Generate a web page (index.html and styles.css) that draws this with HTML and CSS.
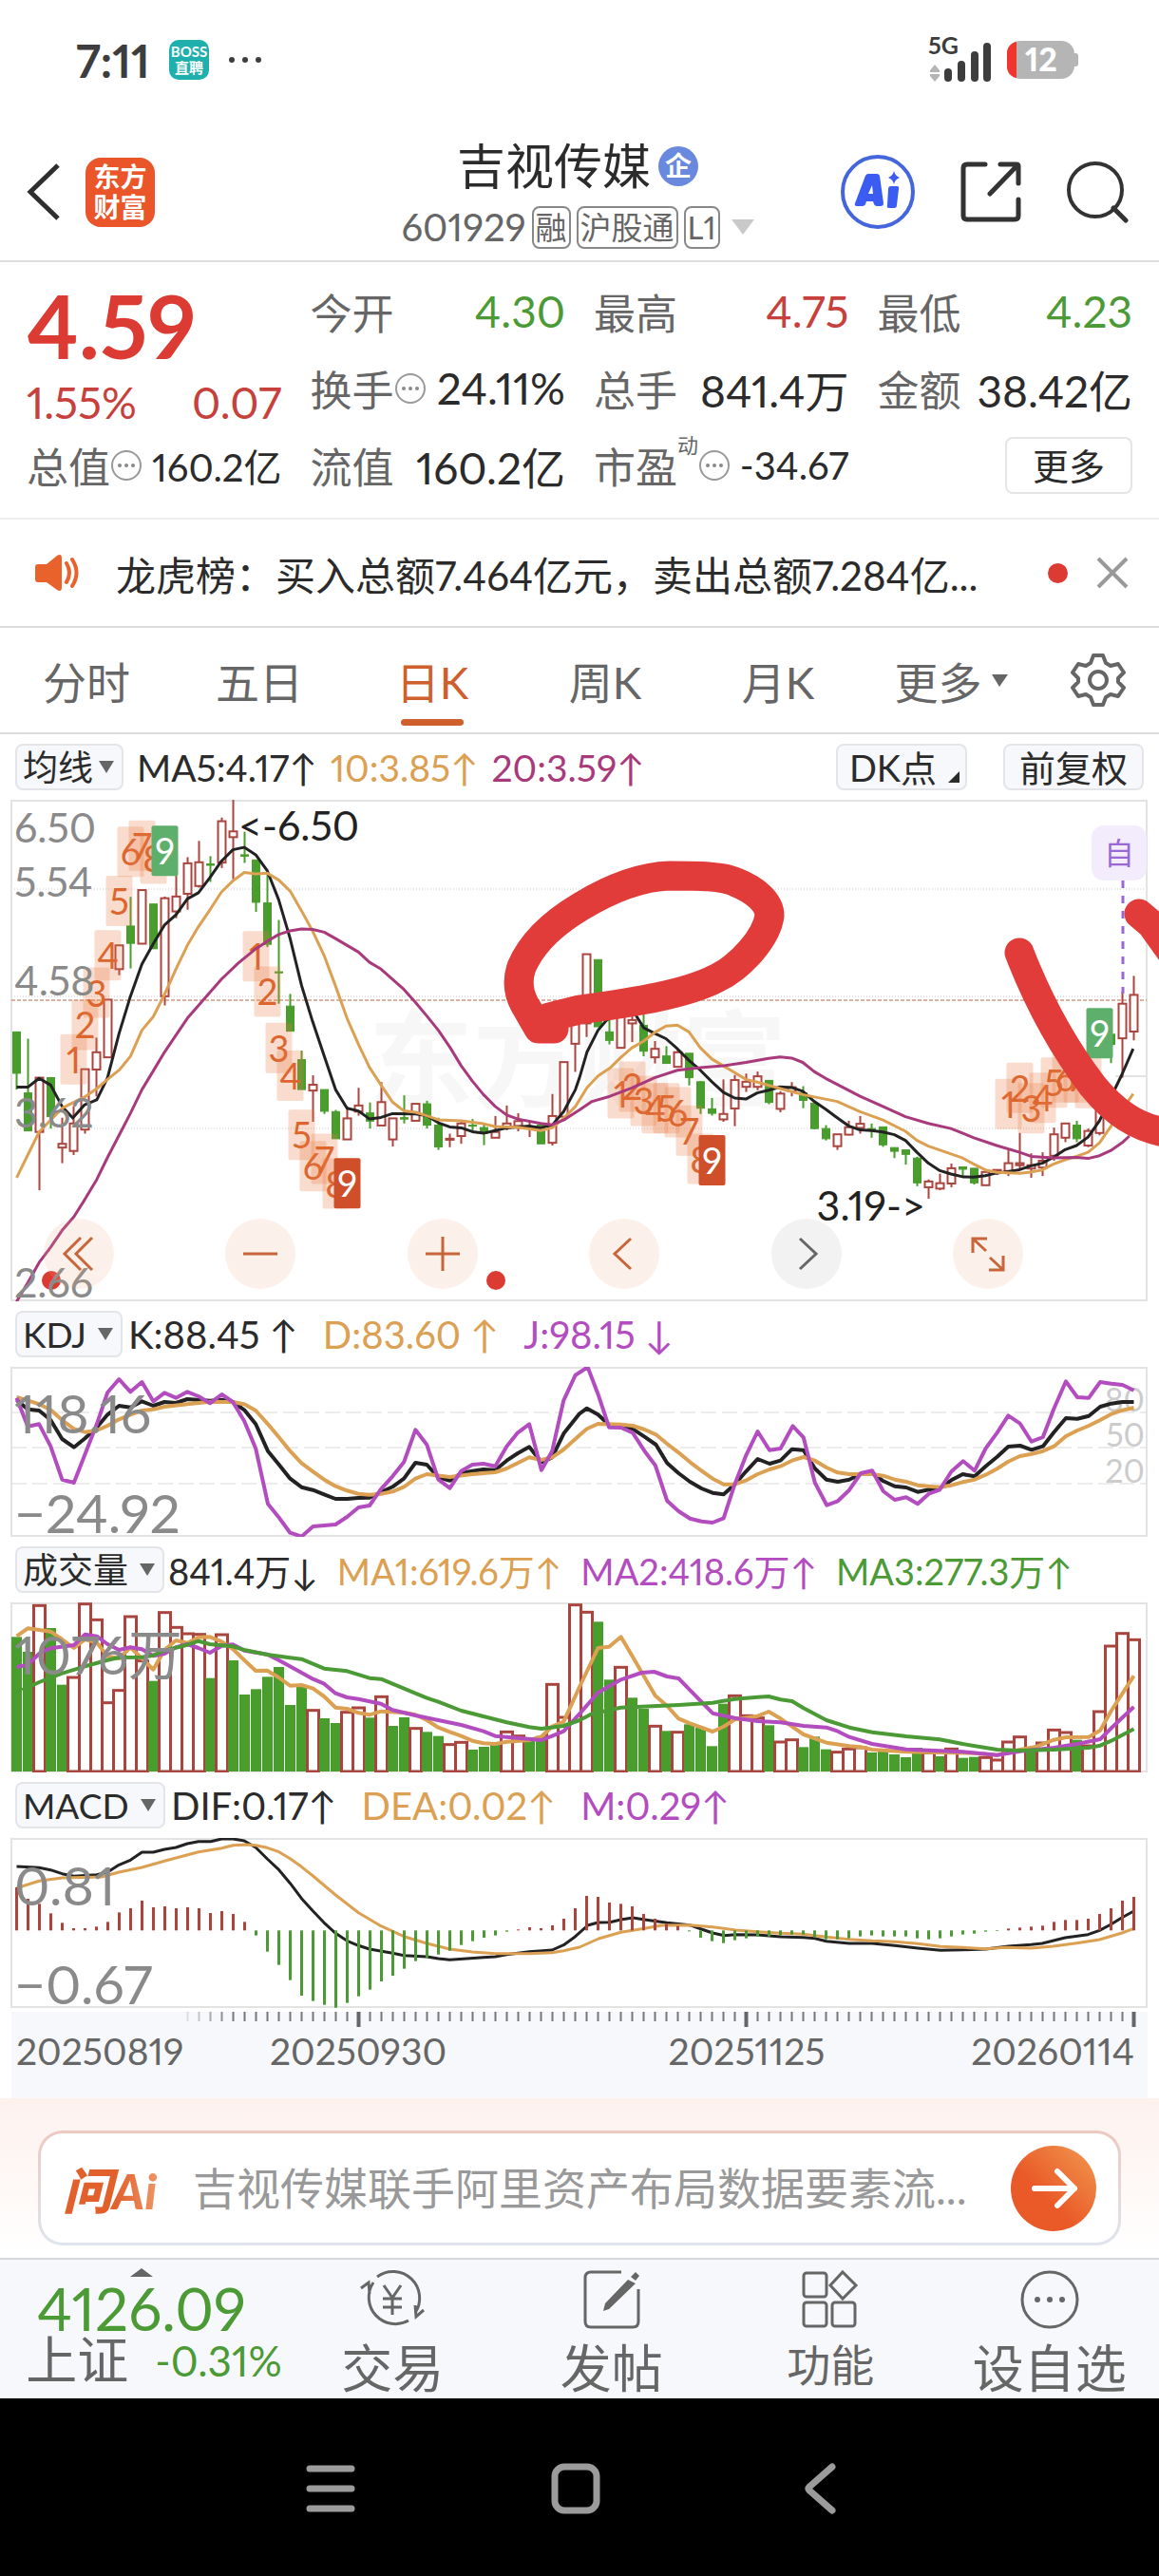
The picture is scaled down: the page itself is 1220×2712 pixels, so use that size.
FILE: index.html
```html
<!DOCTYPE html>
<html lang="zh-CN">
<head>
    <meta charset="UTF-8">
    <meta name="viewport" content="width=device-width, initial-scale=1.0">
    <title>吉视传媒 601929</title>
    <link rel="stylesheet" href="styles.css">
</head>
<body>
    <div class="status-bar">
        <span class="clock">7:11</span>
        <span class="boss"><span>BOSS</span><span>直聘</span></span>
        <svg class="dots" width="36" height="8" viewBox="0 0 36 8"><circle cx="4" cy="4" r="3"/><circle cx="18" cy="4" r="3"/><circle cx="32" cy="4" r="3"/></svg>
        <div class="signal">
            <span class="net">5G</span>
            <svg width="68" height="46" viewBox="0 0 68 46">
                <path d="M2 34l5-6 5 6v2H2zM2 38h10v2l-5 6-5-6z" fill="#b5b5b5"/>
                <path d="M21 42V36M35 42V28M49 42V18M62 42V9" stroke="#3d3d3d" stroke-width="8" stroke-linecap="round"/>
            </svg>
        </div>
        <svg class="battery" width="76" height="40" viewBox="0 0 76 40">
            <rect x="68" y="13" width="7" height="14" rx="3" fill="#b5b5b5"/>
            <rect width="71" height="40" rx="14" fill="#b5b5b5"/>
            <path d="M10 1V39C4 38 0 33 0 27V13C0 7 4 2 10 1z" fill="#f0352f"/>
            <text x="36" y="32" text-anchor="middle">12</text>
        </svg>
    </div>

    <header class="top">
        <div class="top-left">
            <button class="icon-btn" aria-label="返回">
                <svg width="36" height="60" viewBox="0 0 36 60"><path d="M33 2L4 30l29 28" fill="none" stroke="#2e2e2e" stroke-width="5"/></svg>
            </button>
            <a class="logo" href="#"><span>东方</span><span>财富</span></a>
        </div>
        <div class="top-title">
            <h1>吉视传媒<span class="corp">企</span></h1>
            <div class="code">
                <span>601929</span><span class="tag">融</span><span class="tag">沪股通</span><span class="tag">L1</span>
                <svg width="24" height="16" viewBox="0 0 24 16"><path d="M0 0h24L12 16z" fill="#c9c9c9"/></svg>
            </div>
        </div>
        <div class="top-right">
            <button class="icon-btn" aria-label="Ai">
                <svg width="80" height="80" viewBox="0 0 80 80">
                    <circle cx="40" cy="40" r="37" fill="#fff" stroke="#4565dc" stroke-width="4"/>
                    <path d="M30 21h9q2 0 3 2l4 29q0 3-3 3h-4q-2 0-3-2l-1-3h-7l-1 3q-1 2-3 2h-6q-3 0-2-3l11-29q1-2 3-2zM34 33l-4 9h5z" fill="#3b5cf0" fill-rule="evenodd"/>
                    <path d="M54 34h6q3 0 2 3l-2 17q0 3-3 3h-5q-3 0-2-3l1-17q0-3 3-3z" fill="#3b5cf0"/>
                    <path d="M57 18q1 5 6 7-5 2-6 7-1-5-6-7 5-2 6-7z" fill="#3b5cf0"/>
                </svg>
            </button>
            <button class="icon-btn" aria-label="分享">
                <svg width="64" height="64" viewBox="0 0 64 64"><path d="M26 3H7q-4 0-4 4v50q0 4 4 4h50q4 0 4-4V40M42 3h17q2 0 2 2v18M60 4L31 34" fill="none" stroke="#333" stroke-width="5" stroke-linecap="round"/></svg>
            </button>
            <button class="icon-btn" aria-label="搜索">
                <svg width="66" height="66" viewBox="0 0 66 66"><circle cx="31" cy="31" r="28" fill="none" stroke="#333" stroke-width="4"/><path d="M50 50l13 13" stroke="#333" stroke-width="5" stroke-linecap="round"/></svg>
            </button>
        </div>
    </header>

    <section class="quote">
        <div class="price-box">
            <div class="price">4.59</div>
            <div class="change"><span>1.55%</span><span>0.07</span></div>
        </div>
        <div class="cell"><span>今开</span><b class="down">4.30</b></div>
        <div class="cell"><span>最高</span><b class="up">4.75</b></div>
        <div class="cell"><span>最低</span><b class="down">4.23</b></div>
        <div class="cell"><span>换手</span><svg class="more-dot"><use href="#dot3"/></svg><b>24.11%</b></div>
        <div class="cell"><span>总手</span><b>841.4万</b></div>
        <div class="cell"><span>金额</span><b>38.42亿</b></div>
        <div class="cell"><span>总值</span><svg class="more-dot"><use href="#dot3"/></svg><b class="small">160.2亿</b></div>
        <div class="cell"><span>流值</span><b>160.2亿</b></div>
        <div class="cell"><span>市盈</span><sup>动</sup><svg class="more-dot"><use href="#dot3"/></svg><b class="small">-34.67</b></div>
        <div class="cell"><button class="more-btn">更多</button></div>
    </section>

    <svg class="defs" width="0" height="0">
        <symbol id="dot3" viewBox="0 0 34 34">
            <circle cx="17" cy="17" r="15" fill="none" stroke="#999" stroke-width="2"/>
            <circle cx="10" cy="17" r="2" fill="#888"/><circle cx="17" cy="17" r="2" fill="#888"/><circle cx="24" cy="17" r="2" fill="#888"/>
        </symbol>
    </svg>

    <div class="news">
        <svg width="48" height="40" viewBox="0 0 48 40">
            <path d="M3 11h9L23 2q5-3 5 3v30q0 6-5 3L12 30H3q-3 0-3-3V14q0-3 3-3z" fill="#ea622b"/>
            <path d="M33 10q6 10 0 20M39 6q9 14 0 28" fill="none" stroke="#ea622b" stroke-width="4" stroke-linecap="round"/>
        </svg>
        <a href="#">龙虎榜：买入总额7.464亿元，卖出总额7.284亿...</a>
        <i></i>
        <button class="icon-btn" aria-label="关闭">
            <svg width="34" height="34" viewBox="0 0 34 34"><path d="M2 2l30 30M32 2L2 32" stroke="#999" stroke-width="4"/></svg>
        </button>
    </div>

    <nav class="tabs">
        <button>分时</button>
        <button>五日</button>
        <button class="active">日K</button>
        <button>周K</button>
        <button>月K</button>
        <button class="tab-more">更多<svg width="17" height="13" viewBox="0 0 17 13"><path d="M0 0h17L8 13z" fill="#666"/></svg></button>
        <button class="gear" aria-label="设置">
            <svg width="58" height="58" viewBox="0 0 58 58" fill="none" stroke="#666" stroke-width="4" stroke-linejoin="round">
                <path d="M24 3h10l3 8 5 3 8-2 6 9-6 6v4l6 6-6 9-8-2-5 3-3 8H24l-3-8-5-3-8 2-6-9 6-6v-4l-6-6 6-9 8 2 5-3z"/>
                <circle cx="29" cy="29" r="9"/>
            </svg>
        </button>
    </nav>

    <main>
        <div class="ind ind-main">
            <span class="picker"><select aria-label="均线"><option>均线</option></select></span>
            <span>MA5:4.17↑</span><span class="orange">10:3.85↑</span><span class="magenta">20:3.59↑</span>
            <button class="chip dk">DK点</button>
            <button class="chip">前复权</button>
        </div>
        <div class="kline">
            <svg class="chart" viewBox="0 0 1220 528">
                <text class="watermark" x="388" y="315">东方财富</text>
                <path class="grid-dot" d="M12 94H1207M12 207H1207M12 346H1207"/>
                <path class="frame" d="M1174 291H1207"/>
                <rect class="frame" x="12" y="1" width="1195" height="526"/>
                <path class="last-price" d="M12 211H1207"/>
                <g id="candles"></g>
                <g id="tags"></g>
                <g id="maLines"></g>
                <circle class="dot" cx="54" cy="506" r="10"/>
                <circle class="dot" cx="522" cy="506" r="10"/>
                <g class="axis-price">
                    <text x="15" y="45">6.50</text>
                    <text x="15" y="102">5.54</text>
                    <text x="15" y="206">4.58</text>
                    <text x="15" y="345">3.62</text>
                    <text x="15" y="524">2.66</text>
                </g>
                <g class="extreme">
                    <text x="251" y="43">&lt;-6.50</text>
                    <text x="974" y="443" text-anchor="end">3.19-&gt;</text>
                </g>
                <path class="self-line" d="M1182 85V204"/>
                <rect x="1149" y="27" width="58" height="58" rx="13" fill="#f2ecfd"/>
                <text class="self" x="1178" y="68" text-anchor="middle">自</text>
                <g class="pen">
                    <path d="M583 241L567 241L552 215Q542 196 549 176C560 150 585 128 612 112C645 92 675 81 705 80C735 80 760 80 775 87C795 95 810 108 810 122C807 145 780 175 756 187C725 204 670 213 610 221L578 229L583 241"/>
                    <path d="M1073 161C1090 205 1115 255 1150 301C1172 328 1195 345 1230 351"/>
                    <path d="M1199 120L1212 131L1240 170"/>
                </g>
            </svg>
            <div class="tools">
                <button aria-label="最左"><svg viewBox="0 0 40 40"><path d="M22 3L5 20l17 17M34 3L17 20l17 17"/></svg></button>
                <button aria-label="缩小"><svg viewBox="0 0 40 40"><path d="M2 20h36"/></svg></button>
                <button aria-label="放大"><svg viewBox="0 0 40 40"><path d="M2 20h36M20 2v36"/></svg></button>
                <button aria-label="左移"><svg viewBox="0 0 40 40"><path d="M27 4L10 20l17 16"/></svg></button>
                <button class="gray" aria-label="右移"><svg viewBox="0 0 40 40"><path d="M13 4l17 16-17 16"/></svg></button>
                <button aria-label="全屏"><svg viewBox="0 0 40 40"><path d="M4 19V4h15M4 4l14 13M36 22v15H21M36 37L22 24"/></svg></button>
            </div>
        </div>

        <div class="ind">
            <span class="picker"><select aria-label="指标一"><option>KDJ</option></select></span>
            <span>K:88.45 ↑</span><span class="orange">D:83.60 ↑</span><span class="purple">J:98.15 ↓</span>
        </div>
        <svg class="chart" viewBox="0 0 1220 179">
            <rect class="frame" x="12" y="1" width="1195" height="177"/>
            <path class="grid-dash" d="M12 48H1207M12 85H1207M12 123H1207"/>
            <g class="axis-right">
                <text x="1205" y="47">80</text>
                <text x="1205" y="84">50</text>
                <text x="1205" y="122">20</text>
            </g>
            <g id="kdjLines"></g>
            <g class="axis-big"><text x="15" y="70">118.16</text><text x="15" y="175">−24.92</text></g>
        </svg>

        <div class="ind ind-vol">
            <span class="picker"><select aria-label="指标二"><option>成交量</option></select></span>
            <span>841.4万↓</span><span class="orange">MA1:619.6万↑</span><span class="purple">MA2:418.6万↑</span><span class="green">MA3:277.3万↑</span>
        </div>
        <svg class="chart" viewBox="0 0 1220 179">
            <rect class="frame" x="12" y="1" width="1195" height="177"/>
            <g id="volBars"></g>
            <g id="volLines"></g>
            <g class="axis-big"><text x="15" y="76">1076万</text></g>
        </svg>

        <div class="ind">
            <span class="picker"><select aria-label="指标三"><option>MACD</option></select></span>
            <span>DIF:0.17↑</span><span class="orange">DEA:0.02↑</span><span class="purple">M:0.29↑</span>
        </div>
        <svg class="chart" viewBox="0 0 1220 179">
            <rect class="frame" x="12" y="1" width="1195" height="177"/>
            <g id="macdLines"></g>
            <g id="macdBars"></g>
            <g class="axis-big"><text x="15" y="71">0.81</text><text x="15" y="175">−0.67</text></g>
        </svg>

        <svg class="chart dates" viewBox="0 0 1220 91">
            <rect x="12" width="1196" height="91" fill="#f7f8fb"/>
            <g id="ticks"></g>
            <text x="17" y="56">20250819</text>
            <text x="377" y="56" text-anchor="middle">20250930</text>
            <text x="786" y="56" text-anchor="middle">20251125</text>
            <text x="1194" y="56" text-anchor="end">20260114</text>
        </svg>
    </main>

    <section class="ask">
        <form class="ask-box">
            <label for="askInput">问Ai</label>
            <input type="text" id="askInput" placeholder="吉视传媒联手阿里资产布局数据要素流...">
            <button type="button" aria-label="发送">
                <svg width="90" height="90" viewBox="0 0 90 90"><path d="M25 45h42M49 27l18 18-18 18" fill="none" stroke="#fff" stroke-width="6" stroke-linecap="round" stroke-linejoin="round"/></svg>
            </button>
        </form>
    </section>

    <nav class="bottom">
        <a class="index" href="#">
            <svg width="24" height="9" viewBox="0 0 24 9"><path d="M12 0l12 9H0z" fill="#666"/></svg>
            <span class="index-value">4126.09</span>
            <span class="index-row"><span class="index-name">上证</span><span class="index-pct">-0.31%</span></span>
        </a>
        <a href="#">
            <svg viewBox="0 0 72 66">
                <path d="M20 9A28 28 0 0 1 60 47M16 15A28 28 0 0 0 53 55M3 21l8-6 1 12M69 44l-8 7-1-12"/>
                <path d="M27 18l9 13 9-13M36 31v18M26 32h20M26 41h20"/>
            </svg>交易
        </a>
        <a href="#">
            <svg viewBox="0 0 72 66">
                <path d="M46 4H14q-6 0-6 6v46q0 6 6 6h44q6 0 6-6V22"/>
                <path d="M53 12l8 4-28 27-6 2 2-8zM56 9l5-5 4 4-4 5z" fill="#666" stroke="none"/>
            </svg>发帖
        </a>
        <a class="fn" href="#">
            <svg viewBox="0 0 72 66">
                <rect x="8" y="5" width="24" height="25" rx="3"/><path d="M49 4l14 14-14 14-13-14z"/>
                <rect x="8" y="36" width="24" height="25" rx="3"/><rect x="38" y="36" width="24" height="25" rx="3"/>
            </svg>功能
        </a>
        <a href="#">
            <svg viewBox="0 0 72 66">
                <circle cx="36" cy="33" r="29"/>
                <g fill="#666" stroke="none"><circle cx="23" cy="33" r="3"/><circle cx="36" cy="33" r="3"/><circle cx="49" cy="33" r="3"/></g>
            </svg>设自选
        </a>
    </nav>

    <div class="sys-nav">
        <button class="icon-btn" aria-label="最近任务"><svg width="52" height="54" viewBox="0 0 52 54"><path d="M4 6h44M4 27h44M4 48h44"/></svg></button>
        <button class="icon-btn" aria-label="主页"><svg width="52" height="54" viewBox="0 0 52 54"><rect x="4" y="4" width="44" height="46" rx="10"/></svg></button>
        <button class="icon-btn" aria-label="返回上级"><svg width="52" height="54" viewBox="0 0 52 54"><path d="M38 4L14 25q-2 2 0 4l24 21"/></svg></button>
    </div>

    <script src="script.js"></script>
</body>
</html>
```
FILE: styles.css
```css
* {
    box-sizing: border-box;
}
body {
    margin: 0;
    background-color: #fff;
    color: #2b2b2b;
    font-family: Lato, "Noto Sans CJK SC", sans-serif;
    font-variant-numeric: proportional-nums;
}
button, input, select {
    font: inherit;
    color: inherit;
    margin: 0;
    padding: 0;
    border: 0;
    background: none;
}
a {
    color: inherit;
    text-decoration: none;
}
svg {
    display: block;
    flex: none;
}
.defs {
    position: absolute;
}
.icon-btn {
    display: flex;
}

/* status bar */
.status-bar {
    display: flex;
    align-items: center;
    height: 126px;
    padding: 0 84px 0 80px;
}
.clock {
    font-size: 48px;
    font-weight: bold;
    color: #3d3d3d;
    width: 98px;
}
.boss {
    width: 42px;
    height: 42px;
    border-radius: 10px;
    background-color: #1fb0ae;
    color: #fff;
    display: flex;
    flex-direction: column;
    align-items: center;
    justify-content: center;
    font-size: 15px;
    font-weight: bold;
    line-height: 17px;
    margin-right: 20px;
}
.dots {
    fill: #3d3d3d;
}
.signal {
    display: flex;
    margin-left: auto;
    position: relative;
}
.net {
    position: absolute;
    top: -8px;
    left: 0;
    font-size: 25px;
    font-weight: bold;
    line-height: 30px;
    color: #3d3d3d;
}
.battery {
    margin-left: 15px;
    font-size: 34px;
    font-weight: 900;
    fill: #fff;
}

/* header */
.top {
    display: grid;
    grid-template-columns: 1fr auto 1fr;
    align-items: center;
    height: 150px;
    padding: 4px 32px 0 28px;
    border-bottom: 2px solid #ddd;
}
.top-left, .top-right {
    display: flex;
    align-items: center;
}
.top-left {
    gap: 26px;
}
.top-right {
    justify-content: flex-end;
    gap: 47px;
}
.logo {
    width: 73px;
    height: 73px;
    border-radius: 16px;
    background-color: #ea5529;
    color: #fff;
    font-size: 28px;
    font-weight: bold;
    line-height: 32px;
    display: flex;
    flex-direction: column;
    align-items: center;
    justify-content: center;
}
.top-title {
    display: flex;
    flex-direction: column;
    align-items: center;
    padding-top: 10px;
}
h1 {
    display: flex;
    align-items: center;
    gap: 8px;
    margin: 0;
    font-size: 51px;
    font-weight: normal;
    line-height: 64px;
}
.corp {
    width: 42px;
    height: 42px;
    border-radius: 50%;
    background-color: #6889dd;
    color: #fff;
    font-size: 28px;
    font-weight: bold;
    line-height: 40px;
    text-align: center;
}
.code {
    display: flex;
    align-items: center;
    gap: 6px;
    height: 64px;
    font-size: 40px;
    color: #666;
}
.code svg {
    margin-left: 6px;
}
.tag {
    border: 2px solid #888;
    border-radius: 8px;
    padding: 0 2px;
    font-size: 33px;
    line-height: 41px;
}

/* quote */
.quote {
    display: grid;
    grid-template-columns: repeat(4, 1fr);
    grid-auto-rows: 81px;
    column-gap: 30px;
    padding: 11px 28px 15px;
    border-bottom: 2px solid #eee;
}
.price-box {
    grid-row: span 2;
    color: #c7403b;
}
.price {
    font-size: 92px;
    font-weight: bold;
    line-height: 112px;
    color: #dc3b33;
}
.change {
    display: flex;
    justify-content: space-between;
    font-size: 46px;
    line-height: 50px;
}
.cell {
    display: flex;
    align-items: center;
    font-size: 44px;
    color: #666;
    white-space: nowrap;
}
.cell b {
    margin-left: auto;
    font-size: 46px;
    font-weight: normal;
    color: #2b2b2b;
}
.cell b.small {
    font-size: 40px;
}
.cell b.up {
    color: #c7403b;
}
.cell b.down {
    color: #4b9a36;
}
.cell sup {
    align-self: flex-start;
    font-size: 22px;
    line-height: 40px;
}
.more-dot {
    width: 34px;
    height: 34px;
}
.more-btn {
    margin-left: auto;
    width: 134px;
    height: 60px;
    border: 2px solid #e5e5e5;
    border-radius: 8px;
    color: #2b2b2b;
    font-size: 38px;
    line-height: 50px;
}

/* news */
.news {
    display: flex;
    align-items: center;
    height: 114px;
    padding: 0 32px 0 37px;
    border-bottom: 2px solid #ddd;
    font-size: 42px;
}
.news a {
    flex: 1;
    margin-left: 37px;
    white-space: nowrap;
}
.news i {
    width: 21px;
    height: 21px;
    margin-right: 30px;
    border-radius: 50%;
    background-color: #dc3b33;
}

/* tabs */
.tabs {
    display: flex;
    height: 112px;
    border-bottom: 2px solid #ddd;
    font-size: 46px;
    color: #666;
}
.tabs button {
    flex: 182;
    position: relative;
    display: flex;
    align-items: center;
    justify-content: center;
}
.tabs .tab-more {
    gap: 10px;
}
.tabs .gear {
    flex: 128;
}
.tabs .active {
    color: #cf5f2c;
}
.tabs .active::after {
    content: "";
    position: absolute;
    bottom: 7px;
    width: 66px;
    height: 7px;
    border-radius: 4px;
    background-color: #cf5f2c;
}

/* indicator rows */
.ind {
    display: flex;
    align-items: center;
    gap: 26px;
    height: 69px;
    padding: 0 16px;
    font-size: 40px;
    white-space: nowrap;
}
.ind-main {
    gap: 14px;
    font-size: 39px;
}
.ind-vol {
    gap: 20px;
    font-size: 38px;
}
.picker {
    position: relative;
    display: flex;
    margin-right: -20px;
}
.ind-vol .picker {
    margin-right: -16px;
}
.ind-main .picker {
    margin-right: 0;
}
.picker select {
    appearance: none;
    height: 49px;
    padding: 0 36px 0 6px;
    border: 2px solid #e3e5e9;
    border-radius: 8px;
    background-color: #f7f8fb;
    font-size: 37px;
    line-height: 45px;
}
.ind-main .picker select {
    padding-right: 30px;
}
.picker::after {
    content: "";
    position: absolute;
    right: 10px;
    top: 18px;
    border: 8px solid transparent;
    border-top: 13px solid #666;
    border-bottom: 0;
    pointer-events: none;
}
.chip {
    height: 49px;
    padding: 0 15px;
    border: 2px solid #e3e5e9;
    border-radius: 8px;
    background-color: #f7f8fb;
    font-size: 38px;
    line-height: 44px;
}
.chip.dk {
    position: relative;
    margin-left: auto;
    margin-right: 24px;
    padding: 0 30px 0 12px;
}
.chip.dk::after {
    content: "";
    position: absolute;
    right: 6px;
    bottom: 6px;
    border-left: 12px solid transparent;
    border-bottom: 12px solid #2b2b2b;
}
.orange {
    color: #dca052;
}
.magenta {
    color: #a83a7c;
}
.purple {
    color: #b34dbf;
}
.green {
    color: #4b9a36;
}

/* charts */
.chart {
    width: 100%;
    height: auto;
}
.kline {
    position: relative;
}
.frame {
    fill: none;
    stroke: #e3e3e3;
    stroke-width: 2;
}
.grid-dot {
    stroke: #ccc;
    stroke-dasharray: 1 2;
}
.grid-dash {
    stroke: #d9d9d9;
    stroke-width: 1;
    stroke-dasharray: 16 6;
}
.last-price {
    stroke: #b86b45;
    stroke-width: 1;
    stroke-dasharray: 4 2;
}
.watermark {
    font-size: 110px;
    font-weight: bold;
    fill: #f7f7f7;
}
.axis-price {
    font-size: 43px;
    fill: #8a8a8a;
}
.axis-big {
    font-size: 57px;
    fill: #8a8a8a;
}
.axis-right {
    font-size: 34px;
    fill: #ccc;
    text-anchor: end;
}
.extreme {
    font-size: 43px;
    fill: #222;
}
.dot {
    fill: #dc3b33;
}
.self {
    font-size: 32px;
    fill: #9a68d6;
}
.self-line {
    stroke: #9a68d6;
    stroke-width: 3;
    stroke-dasharray: 8 8;
}
.pen {
    fill: none;
    stroke: #e13c39;
    stroke-width: 31;
    stroke-linecap: round;
    stroke-linejoin: round;
}
.line {
    fill: none;
    stroke-width: 3;
    stroke-linejoin: round;
}
#kdjLines .line, #volLines .line {
    stroke-width: 4;
}
.line.k-black {
    stroke: #222;
}
.line.k-orange {
    stroke: #dca052;
}
.line.k-magenta {
    stroke: #a83a7c;
}
.line.k-purple {
    stroke: #b34dbf;
}
.line.k-green {
    stroke: #4b9a36;
}
.fall {
    fill: #489d2c;
    stroke: #489d2c;
}
.rise {
    fill: #fff;
    stroke: #a9453f;
    stroke-width: 2;
}
.bar-rise {
    fill: #fff;
    stroke: #a9453f;
    stroke-width: 3;
}
.bar-fall {
    fill: #489d2c;
}
.stick-up {
    stroke: #a9453f;
    stroke-width: 3;
}
.stick-down {
    stroke: #4b9a36;
    stroke-width: 3;
}
.wick {
    stroke-width: 2;
}
.tag-box {
    fill: #e87f46;
    fill-opacity: .27;
}
.tag-nine-up {
    fill: #5eaf6c;
}
.tag-nine-down {
    fill: #cf4f2a;
}
.tag-text {
    font-size: 38px;
    fill: #dd662f;
    text-anchor: middle;
}
.tag-text.nine {
    fill: #fff;
}
.dates {
    margin-top: 4px;
    font-size: 39px;
    fill: #666;
}
.tick {
    stroke: #777;
    stroke-width: 2;
}
.tick.major {
    stroke: #666;
    stroke-width: 4;
}
.tools {
    position: absolute;
    left: 46px;
    right: 143px;
    bottom: 13px;
    display: flex;
    justify-content: space-between;
}
.tools button {
    display: flex;
    width: 74px;
    height: 74px;
    align-items: center;
    justify-content: center;
    border-radius: 50%;
    background-color: rgba(240, 170, 130, .17);
    color: #c9653a;
}
.tools .gray {
    background-color: #f2f2f2;
    color: #666;
}
.tools svg {
    width: 40px;
    height: 40px;
    fill: none;
    stroke: currentColor;
    stroke-width: 3;
}

/* ask */
.ask {
    padding: 34px 40px 13px;
    background: linear-gradient(#fdf1ed, #fff);
}
.ask-box {
    display: flex;
    align-items: center;
    height: 121px;
    padding: 0 23px;
    border: 3px solid transparent;
    border-radius: 26px;
    background: linear-gradient(#fff, #fff) padding-box, linear-gradient(#ecc8c0, #dfe5ee) border-box;
}
.ask-box label {
    width: 137px;
    font-size: 52px;
    font-weight: 900;
    font-style: italic;
    background: linear-gradient(90deg, #e2602c 40%, #efa070 80%);
    background-clip: text;
    color: transparent;
}
.ask-box input {
    flex: 1;
    min-width: 0;
    height: 80px;
    font-size: 46px;
    outline: none;
}
.ask-box input::placeholder {
    color: #999;
    opacity: 1;
}
.ask-box button {
    border-radius: 50%;
    background: linear-gradient(45deg, #ea5a28 40%, #f09a50);
}

/* bottom nav */
.bottom {
    display: grid;
    grid-template-columns: 298px repeat(4, 1fr);
    height: 148px;
    border-top: 2px solid #d5d7da;
    background-color: #f7f8fb;
    color: #666;
    font-size: 54px;
    line-height: 80px;
    overflow: hidden;
}
.bottom a {
    display: flex;
    flex-direction: column;
    align-items: center;
    padding-top: 9px;
    white-space: nowrap;
}
.bottom a > svg {
    width: 72px;
    height: 66px;
    fill: none;
    stroke: #666;
    stroke-width: 3;
}
.bottom .fn {
    font-size: 46px;
    line-height: 72px;
}
.bottom .index > svg {
    width: 24px;
    height: 9px;
    stroke: none;
}
.index-value {
    font-size: 62px;
    line-height: 66px;
    color: #4b9a36;
}
.bottom .index-row {
    display: flex;
    align-items: center;
    gap: 28px;
    padding-left: 26px;
    line-height: 44px;
}
.index-pct {
    font-size: 44px;
    color: #4b9a36;
}

.sys-nav {
    display: flex;
    align-items: center;
    justify-content: center;
    gap: 206px;
    height: 189px;
    padding-right: 8px;
    background-color: #000;
}
.sys-nav svg {
    fill: none;
    stroke: #9b9b9b;
    stroke-width: 7;
    stroke-linecap: round;
}
```
FILE: script.js
```js
const NS = "http://www.w3.org/2000/svg";
const STEP = 12;
const FIRST = 17.5;
const KX = 610 / 1568; // data x to chart x

function add(parent, name, attrs, text) {
    const el = document.createElementNS(NS, name);
    for (const key in attrs) el.setAttribute(key, attrs[key]);
    if (text) el.textContent = text;
    parent.appendChild(el);
    return el;
}

const xAt = i => FIRST + STEP * i;
const priceY = v => v / 2.8 - 11;
const kdjY = v => v / 3 - 68;
const volY = v => v / 3 - 316;
const macdY = v => v / 3 - 64;

function drawLine(id, color, data, toY) {
    const points = data.trim().split(/\s+/).map(p => {
        const [x, y] = p.split(",").map(Number);
        return (x * KX).toFixed(1) + "," + toY(y).toFixed(1);
    });
    add(document.getElementById(id), "polyline", { class: "line k-" + color, points: points.join(" ") });
}

// direction, body top, body bottom, high, low
const candles = `G,715,837,715,885 G,895,1007,735,1007 R,850,1010,850,1182 G,850,965,848,1000 R,1045,1056,968,1102
R,985,1066,935,1078 R,825,1003,825,1015 R,775,826,732,905 R,620,790,620,790 R,460,530,460,548
G,403,454,317,528 R,297,455,297,455 G,338,470,338,470 R,321,610,316,637 R,316,360,255,380
R,218,308,200,355 R,215,285,152,290 G,220,224,197,273 R,94,216,83,232 R,124,141,31,265
G,193,197,125,217 G,208,333,208,361 G,335,457,250,465 G,538,541,385,632 G,639,713,603,713
G,797,885,770,885 R,871,888,843,980 G,885,949,885,957 G,950,1030,945,1030 R,970,1032,935,1032
R,932,950,880,962 G,954,978,923,1000 R,922,991,863,991 R,970,1032,970,1053 G,968,972,902,985
R,927,977,927,977 G,927,990,918,1000 G,990,1054,968,1063 R,1030,1033,1015,1055 R,985,1022,975,1045
G,990,993,972,1010 G,997,1014,985,1049 R,1010,1027,963,1027 R,985,995,932,1005 R,978,992,955,1008
R,994,997,980,1025 G,990,1045,990,1045 R,963,1042,898,1050 R,804,965,804,965 R,690,750,690,833
R,486,690,486,730 G,502,700,502,700 G,715,740,680,752 R,660,762,660,762 R,680,690,650,745
G,696,772,660,787 R,765,790,742,808 G,786,808,757,808 R,775,818,765,818 G,778,850,778,873
G,862,940,860,957 G,942,955,910,962 R,957,973,855,980 R,857,941,842,993 R,862,877,838,892
R,846,877,832,887 G,858,923,858,928 R,897,942,890,952 R,878,890,863,905 G,895,917,875,940
G,925,1000,925,1002 G,1000,1030,990,1035 R,1017,1052,1017,1063 R,996,1018,977,1020 R,986,998,963,1015
G,1000,1004,985,1027 G,995,1048,995,1054 G,1056,1067,1056,1087 G,1063,1076,1063,1106 G,1087,1160,1083,1170
R,1156,1173,1150,1207 R,1161,1177,1133,1182 R,1117,1162,1103,1173 G,1113,1120,1113,1140 G,1117,1160,1117,1165
R,1128,1167,1128,1167 R,1122,1127,1120,1137 R,1102,1125,1062,1140 R,1102,1108,1013,1122 R,1108,1118,1073,1145
R,1095,1115,1070,1140 R,1017,1080,997,1095 R,985,1027,985,1040 G,990,1030,977,1040 R,1007,1050,1000,1055
R,925,1013,925,1020 G,722,752,722,807 R,632,734,597,850 R,606,714,550,740`.split(/\s+/);

candles.forEach((row, i) => {
    const c = row.split(",");
    const [top, bottom, high, low] = c.slice(1).map(v => priceY(+v));
    const cls = c[0] === "G" ? "fall" : "rise";
    const g = document.getElementById("candles");
    add(g, "path", { class: cls + " wick", d: `M${xAt(i)} ${high}V${low}` });
    add(g, "rect", { class: cls, x: xAt(i) - 4, y: top, width: 8, height: Math.max(bottom - top, 1) });
});

// nine-turn marks: first candle and top of every mark
const marks = [
    { start: 5, nine: "up", tops: [722, 620, 525, 415, 255, 110, 92, 130, 107] },
    { start: 21, nine: "down", tops: [418, 522, 688, 770, 944, 1037, 1015, 1088, 1087] },
    { start: 53, nine: "down", tops: [822, 802, 844, 866, 866, 878, 932, 1015, 1019] },
    { start: 87, nine: "up", tops: [853, 806, 866, 835, 790, 775, 775, 792, 645] }
];
marks.forEach(m => m.tops.forEach((top, n) => {
    const g = document.getElementById("tags");
    const nine = n === 8;
    const x = xAt(m.start + n);
    const y = priceY(top);
    add(g, "rect", { class: nine ? "tag-nine-" + m.nine : "tag-box", x: x - 14, y: y, width: 28, height: 53, rx: 2 });
    add(g, "text", { class: nine ? "tag-text nine" : "tag-text", x: x, y: y + 41 }, String(n + 1));
}));

drawLine("maLines", "black", `45,878 75,878 106,852 137,872 168,935 197,969 229,930 262,915 291,850 322,720 353,610 384,515
415,455 445,400 476,370 507,323 537,305 568,260 599,212 630,178 661,171 692,193 723,240 754,325 785,440 816,578 846,685
877,785 908,885 939,940 970,948 1000,972 1031,967 1062,956 1124,957 1155,962 1186,983 1217,995 1248,998 1278,1009
1308,1014 1340,1006 1371,998 1432,993 1463,998 1494,990 1525,950 1557,885 1568,850 1588,775 1618,710 1640,682 1680,650
1720,665 1742,703 1771,719 1802,735 1833,765 1864,799 1895,828 1926,862 1957,893 1988,910 2018,913 2049,895 2080,887
2111,877 2142,879 2172,890 2203,920 2234,943 2265,968 2296,992 2327,1004 2358,1006 2389,1010 2420,1018 2450,1035
2481,1070 2512,1102 2543,1124 2573,1134 2605,1142 2635,1143 2666,1139 2697,1131 2728,1127 2759,1121 2790,1110
2820,1102 2850,1085 2882,1062 2913,1050 2944,1025 2975,977 3005,910 3036,840 3066,765`, priceY);
drawLine("maLines", "orange", `45,1145 75,1078 106,1010 168,940 229,907 262,882 291,855 322,828 353,787 384,710 415,670
445,605 476,530 507,460 537,405 568,355 599,303 630,270 661,245 692,249 723,247 754,267 785,300 816,358 846,418 877,490
908,580 939,675 970,752 1000,820 1031,872 1062,922 1093,948 1124,952 1155,962 1186,974 1248,977 1308,986 1340,994
1401,996 1463,1006 1494,998 1525,970 1557,935 1588,880 1618,845 1650,822 1680,790 1710,762 1742,742 1771,717 1802,698
1833,695 1864,715 1895,762 1926,795 1957,815 1988,835 2018,855 2049,863 2111,882 2172,900 2265,920 2327,950 2389,975
2450,1008 2481,1035 2512,1052 2573,1075 2605,1087 2635,1105 2666,1122 2697,1129 2759,1132 2790,1128 2820,1122
2850,1105 2882,1092 2913,1082 2944,1070 2975,1042 3005,995 3036,945 3066,898`, priceY);
drawLine("maLines", "magenta", `45,1510 75,1455 106,1395 137,1350 168,1300 200,1260 229,1210 262,1150 291,1085 322,1020
353,955 384,885 415,830 445,775 476,725 507,675 553,617 599,560 645,512 692,470 723,448 754,428 785,417 816,412 846,413
877,421 908,440 970,480 1000,510 1031,530 1093,590 1124,628 1155,668 1186,710 1217,760 1248,815 1278,860 1308,900
1340,935 1371,960 1401,972 1463,985 1494,989 1525,975 1568,945 1602,920 1650,905 1710,880 1771,850 1833,828 1895,820
1957,815 2018,805 2080,793 2111,789 2142,792 2172,805 2203,832 2234,852 2265,870 2327,905 2389,935 2450,965 2512,985
2573,1000 2635,1027 2697,1050 2759,1070 2790,1082 2850,1086 2913,1085 2944,1088 2975,1080 3005,1065 3036,1042
3056,1022`, priceY);

// KDJ
drawLine("kdjLines", "black", `45,308 75,338 106,342 137,372 168,432 200,458 230,430 262,395 291,355 322,327 353,332
384,313 415,327 445,315 476,318 507,306 568,311 600,308 630,315 661,340 692,385 725,470 755,513 785,557 816,584 847,593
877,607 908,621 939,621 970,618 1000,617 1031,600 1062,583 1093,557 1124,507 1155,513 1186,553 1217,563 1248,540
1278,533 1308,528 1340,530 1371,500 1401,477 1432,457 1465,505 1494,490 1525,415 1568,352 1588,335 1618,355 1648,387
1680,392 1712,400 1744,425 1775,450 1805,508 1836,540 1867,567 1898,588 1928,602 1958,607 1988,575 2018,535 2050,495
2082,510 2112,500 2143,464 2174,467 2205,525 2236,560 2267,567 2298,560 2329,542 2360,538 2390,565 2421,581 2452,585
2483,599 2513,592 2543,588 2574,562 2605,543 2637,550 2667,518 2698,488 2728,456 2760,453 2791,466 2822,455 2852,410
2884,366 2915,368 2946,359 2977,330 3007,320 3037,315 3068,315`, kdjY);
drawLine("kdjLines", "orange", `45,300 75,310 106,322 137,340 168,372 200,400 230,410 262,405 291,390 322,370 353,355
384,342 415,338 445,330 507,322 568,314 630,315 661,322 692,342 725,385 755,427 785,470 816,508 847,535 877,560 908,581
939,595 970,605 1000,608 1031,605 1062,598 1093,583 1124,557 1155,543 1217,552 1278,543 1340,537 1371,525 1401,508
1432,490 1465,498 1494,490 1525,465 1568,420 1588,400 1618,384 1680,386 1712,390 1744,402 1775,418 1805,447 1836,475
1867,505 1898,532 1928,557 1958,575 1988,575 2018,563 2050,543 2082,528 2112,518 2143,500 2174,489 2205,500 2236,522
2267,538 2298,543 2360,543 2390,548 2421,560 2452,567 2483,578 2543,584 2574,578 2605,568 2637,560 2667,545 2698,526
2728,503 2760,486 2791,479 2822,470 2852,455 2884,423 2915,405 2946,390 2977,372 3007,353 3037,341 3068,333`, kdjY);
drawLine("kdjLines", "purple", `45,302 75,392 106,385 137,455 168,560 200,570 230,480 262,385 291,285 322,243 353,283
384,252 415,313 445,286 476,302 507,283 537,297 568,319 600,291 630,315 661,375 692,462 725,637 755,680 785,728 816,740
847,708 908,702 939,678 970,648 1000,642 1031,590 1062,550 1093,505 1124,403 1155,450 1186,560 1217,587 1248,533
1278,513 1308,510 1340,518 1371,455 1401,412 1432,385 1465,530 1494,470 1525,310 1557,230 1590,205 1618,290 1648,395
1680,396 1712,412 1744,470 1773,515 1805,627 1836,660 1867,683 1898,692 1928,696 1958,682 1988,575 2018,485 2050,408
2082,467 2112,462 2145,391 2174,427 2205,570 2237,641 2267,628 2298,593 2329,540 2360,532 2390,597 2421,624 2452,616
2483,637 2513,605 2543,592 2574,535 2606,502 2637,532 2667,462 2698,412 2728,358 2760,383 2791,440 2822,426 2852,335
2884,250 2915,300 2946,302 2977,252 3007,257 3037,261 3068,278`, kdjY);

// volume
const volumes = `G1057 G1104 R955 G1029 G1208 R1182 R950 R1000 R1262 R1223 R990 R1130 G1196 R977 R1024 R1044 R1046 G1187
R1047 G1131 G1239 G1222 G1183 G1152 G1272 G1215 R1286 G1314 G1329 R1292 R1278 G1312 R1243 G1338 G1311 R1343 G1357 G1370
R1394 R1387 G1413 G1404 G1390 R1354 R1367 G1385 G1370 R1204 R1308 R953 R976 G1009 G1192 R1150 G1249 G1284 R1336 G1354
R1355 G1333 G1343 G1402 G1268 R1240 R1303 R1310 G1336 R1386 R1379 G1405 G1372 G1412 R1418 R1408 R1404 G1422 G1418 G1428
G1437 G1407 R1420 G1434 R1408 G1439 G1436 R1435 R1443 R1386 R1370 G1415 R1389 R1348 R1356 G1382 R1398 R1290 R1083 R1043
R1063`.split(/\s+/);
volumes.forEach((v, i) => {
    const up = v[0] === "R";
    const y = volY(+v.slice(1)) + (up ? 1 : 0);
    add(document.getElementById("volBars"), "rect", {
        class: up ? "bar-rise" : "bar-fall",
        x: xAt(i) - (up ? 6 : 5.5),
        y: y,
        width: up ? 12 : 11,
        height: 178 - y
    });
});
drawLine("volLines", "orange", `45,1055 75,1030 137,1040 168,1065 200,1092 230,1065 262,1075 291,1118 322,1125 353,1090
384,1125 415,1160 445,1098 476,1068 507,1076 537,1058 568,1057 600,1072 630,1095 661,1130 692,1164 723,1163 754,1185
785,1211 816,1209 847,1220 877,1245 908,1280 939,1284 970,1297 1000,1303 1031,1292 1093,1296 1124,1303 1155,1320
1186,1343 1217,1357 1248,1370 1278,1385 1308,1393 1340,1395 1371,1388 1432,1383 1465,1372 1494,1340 1525,1325 1568,1215
1618,1092 1648,1088 1680,1057 1712,1120 1773,1243 1805,1275 1836,1315 1867,1330 1928,1356 1958,1340 1988,1318 2050,1307
2080,1293 2112,1315 2143,1340 2174,1365 2236,1391 2298,1402 2329,1405 2360,1413 2452,1420 2543,1422 2637,1424 2698,1430
2728,1423 2760,1413 2800,1405 2852,1382 2884,1374 2946,1373 2977,1352 3007,1290 3068,1180`, volY);
drawLine("volLines", "purple", `45,1152 75,1145 106,1110 137,1093 200,1083 230,1049 262,1055 291,1080 322,1098 353,1090
384,1096 415,1117 445,1110 476,1090 507,1080 537,1092 568,1107 600,1085 630,1081 661,1100 723,1112 754,1130 816,1170
847,1190 877,1205 908,1235 939,1248 970,1253 1031,1268 1062,1288 1124,1305 1186,1320 1248,1335 1308,1355 1340,1370
1401,1376 1465,1383 1494,1370 1525,1355 1568,1300 1618,1233 1680,1192 1736,1170 1770,1167 1805,1182 1836,1188 1867,1225
1928,1298 1988,1313 2050,1323 2112,1327 2174,1338 2236,1343 2267,1355 2298,1373 2360,1395 2452,1412 2543,1417 2605,1420
2698,1430 2760,1418 2852,1407 2915,1395 2977,1380 3007,1345 3068,1278`, volY);
drawLine("volLines", "green", `60,1225 106,1200 168,1172 230,1150 291,1130 322,1122 384,1121 415,1115 445,1100 507,1082
537,1070 568,1080 630,1087 661,1098 723,1113 785,1123 816,1127 877,1157 939,1165 1000,1187 1031,1190 1093,1220 1155,1250
1186,1262 1248,1290 1308,1308 1371,1327 1432,1342 1465,1347 1525,1338 1568,1320 1602,1300 1680,1280 1836,1272 1928,1265
1988,1253 2050,1247 2080,1245 2112,1255 2143,1260 2174,1282 2236,1320 2298,1343 2360,1358 2452,1371 2543,1381 2605,1395
2698,1413 2760,1416 2852,1413 2946,1407 2977,1400 3007,1385 3068,1348`, volY);

// MACD
const ZERO = 484;
const sticks = [348, 384, 400, 430, 460, 477, 477, 472, 457, 427, 414, 390, 411, 408, 414, 411, 414, 429, 423, 432, 457,
    500, 551, 593, 641, 690, 707, 719, 728, 713, 692, 671, 645, 627, 605, 581, 570, 560, 548, 530, 518, 507, 500, 488, 481,
    474, 477, 468, 447, 414, 375, 378, 396, 400, 408, 432, 447, 463, 470, 487, 507, 518, 524, 515, 509, 503, 503, 500, 497,
    497, 505, 512, 512, 509, 503, 500, 503, 503, 503, 509, 512, 509, 503, 497, 494, 488, 486, 478, 475, 472, 469, 457, 451,
    451, 447, 432, 414, 390, 378];
sticks.forEach((v, i) => {
    add(document.getElementById("macdBars"), "path", {
        class: v < ZERO ? "stick-up" : "stick-down",
        d: `M${xAt(i)} ${macdY(ZERO)}V${macdY(v)}`
    });
});
drawLine("macdLines", "black", `45,282 106,286 137,293 168,305 200,313 262,308 291,300 322,277 353,262 384,237 415,237
445,228 476,222 507,210 537,203 570,203 600,195 630,195 661,201 692,222 723,258 755,293 785,335 816,383 847,423 877,460
908,493 939,517 970,532 1000,543 1062,556 1093,563 1155,567 1186,573 1217,577 1308,569 1340,567 1371,560 1432,551
1494,546 1525,530 1557,503 1590,468 1618,459 1650,458 1680,450 1712,444 1744,450 1805,460 1866,467 1898,480 1928,492
1960,500 1990,497 2050,498 2112,504 2174,506 2205,509 2236,518 2298,525 2360,525 2421,532 2483,540 2545,547 2606,545
2668,543 2728,534 2790,529 2820,525 2882,507 2944,497 2975,484 3006,465 3036,443 3068,423`, macdY);
drawLine("macdLines", "orange", `45,350 106,328 168,318 275,315 322,300 384,285 445,265 537,236 600,224 630,215 670,213
692,215 723,223 755,236 785,257 816,283 847,312 908,372 970,428 1031,470 1093,503 1155,525 1217,543 1278,552 1340,557
1432,557 1494,554 1525,548 1568,537 1620,510 1680,490 1744,478 1790,468 1866,467 1928,473 1990,483 2050,488 2112,493
2174,496 2236,505 2298,512 2360,517 2421,520 2483,526 2545,535 2606,538 2668,542 2720,538 2790,540 2850,534 2913,524
2975,513 3036,492 3068,478`, macdY);

// date ruler, fades in on the left
for (let i = 15; i < 99; i++) {
    const major = i === 30 || i === 64 || i === 98;
    add(document.getElementById("ticks"), "path", {
        class: major ? "tick major" : "tick",
        d: `M${xAt(i)} 0V${major ? 16 : 10}`,
        opacity: Math.min(1, (i - 14) / 5)
    });
}
```
